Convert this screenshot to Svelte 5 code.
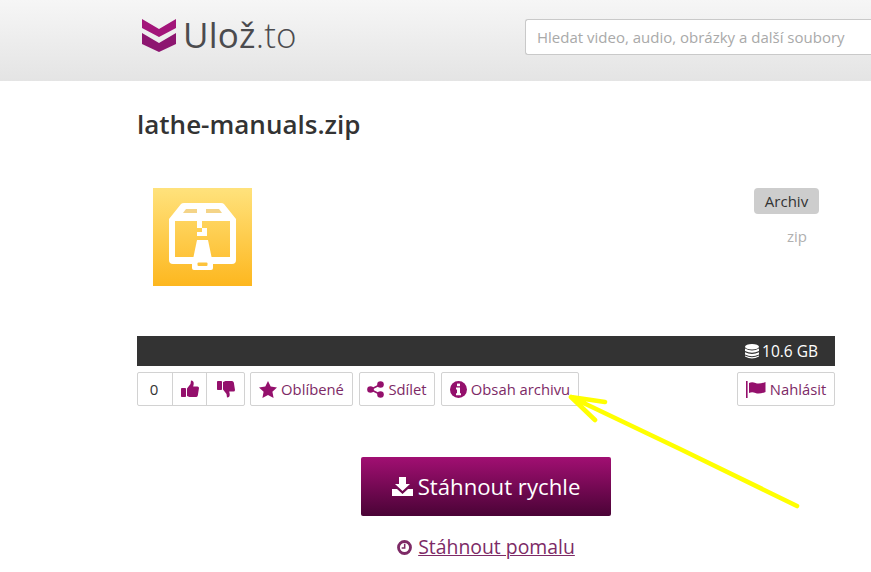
<script>
  const sizeLabel = '10.6 GB'
</script>

<style>
  :global(body) {
    margin: 0;
    background: #fff;
    font-family: "Open Sans", "Liberation Sans", sans-serif;
    color: #333;
  }

  .page {
    position: relative;
    width: 871px;
    height: 572px;
    overflow: hidden;
  }

  .top {
    height: 81px;
    box-sizing: border-box;
    padding: 17px 0 0 142px;
    display: flex;
    background: linear-gradient(#f6f6f6, #e4e4e4);
  }

  .logo {
    display: flex;
    gap: 7px;
    width: 383px;
    height: 36px;
    align-items: center;
  }

  .logo svg {
    flex: none;
  }

  .logo-text {
    font-family: "Open Sans", sans-serif;
    font-size: 35px;
    line-height: 36px;
    color: #4b4b4e;
    letter-spacing: 0.2px;
  }

  .logo-text span {
    font-weight: 300;
  }

  .search {
    width: 346px;
    height: 36px;
    margin-top: 2px;
    box-sizing: border-box;
    padding-left: 11px;
    background: #fff;
    border: 1px solid #c9c9c9;
    border-right: 0;
    border-radius: 3px 0 0 3px;
    font-size: 15px;
    line-height: 35px;
    color: #a9a9a9;
    white-space: nowrap;
  }

  .content {
    width: 698px;
    margin-left: 137px;
  }

  h1 {
    margin: 0;
    padding-top: 25px;
    font-size: 26px;
    line-height: 36px;
    font-weight: 600;
    color: #333;
  }

  .details {
    display: flex;
    justify-content: space-between;
    margin-top: 46px;
    height: 148px;
  }

  .thumb {
    width: 99px;
    height: 98px;
    margin-left: 16px;
    background: linear-gradient(#ffe27c, #fdb71f);
  }

  .thumb svg {
    display: block;
  }

  .meta {
    width: 65px;
    margin-right: 16px;
    text-align: center;
  }

  .badge {
    height: 26px;
    background: #cdcdcd;
    border-radius: 4px;
    font-size: 15px;
    line-height: 26px;
    color: #333;
  }

  .ext {
    margin-top: 11px;
    padding-left: 21px;
    font-size: 15px;
    line-height: 22px;
    color: #b0b0b0;
    text-align: center;
  }

  .bar {
    height: 30px;
    box-sizing: border-box;
    padding-right: 17px;
    display: flex;
    justify-content: flex-end;
    align-items: center;
    gap: 3px;
    background: #333;
    color: #fff;
    font-size: 15.5px;
  }

  .actions {
    display: flex;
    margin-top: 6px;
    gap: 6px;
    height: 34px;
  }

  .btn, .group {
    box-sizing: border-box;
    height: 34px;
    border: 1px solid #d2d2d2;
    border-radius: 2px;
    background: #fff;
    color: #7d2a66;
    font-size: 14.8px;
  }

  .btn {
    display: flex;
    align-items: center;
    justify-content: center;
    gap: 4px;
  }

  .group {
    display: flex;
    width: 108px;
    margin-right: -1px;
  }

  .cell {
    display: flex;
    align-items: center;
    justify-content: center;
    border-left: 1px solid #d2d2d2;
    width: 33px;
  }

  .cell:last-child {
    flex: 1;
  }

  .count {
    width: 32px;
    padding-right: 2px;
    border-left: 0;
    color: #333;
    font-size: 15px;
  }

  .fav { width: 103px; }
  .share { width: 76px; }
  .archive { width: 138px; }
  .report { width: 98px; margin-left: auto; }

  .download {
    width: 250px;
    height: 59px;
    margin: 51px 0 0 224px;
    display: flex;
    align-items: center;
    justify-content: center;
    gap: 5px;
    border-radius: 2px;
    background: linear-gradient(#a10f72, #4a0336);
    color: #fff;
    font-size: 22.2px;
  }

  .slow {
    margin-top: 19px;
    display: flex;
    justify-content: center;
    align-items: center;
    gap: 6px;
    font-size: 19.4px;
    line-height: 24px;
    color: #7d2a66;
  }

  .slow span {
    text-decoration: underline;
    text-decoration-thickness: 1px;
  }

  .arrow {
    position: absolute;
    left: 0;
    top: 0;
    pointer-events: none;
  }
</style>

<div class="page">
  <header class="top">
    <div class="logo">
      <svg width="34" height="33" viewBox="0 0 34 33">
        <path d="M0 0 L17 10 L34 0 V9 L17 18 L0 9 Z" fill="#a3157a" />
        <path d="M0 14 L17 24 L34 14 V25 L17 33 L0 25 Z" fill="#8d1670" />
      </svg>
      <div class="logo-text">Ulož<span>.to</span></div>
    </div>
    <div class="search">Hledat video, audio, obrázky a další soubory</div>
  </header>

  <main class="content">
    <h1>lathe-manuals.zip</h1>

    <div class="details">
      <div class="thumb">
        <svg width="99" height="98" viewBox="0 0 99 98">
          <path d="M16 31 L28 16 Q29 15 31 15 H68 Q70 15 71 16 L83 31 V72 Q83 76 79 76 H58 V69 H77 V33 H22 V69 H41 V76 H20 Q16 76 16 72 Z" fill="#fff" />
          <path d="M30 25 L33 21 H44 V25 Z M53 25 V21 H66 L69 25 Z" fill="#f4d488" />
          <path d="M44 33 H49 V40 H54 V44 H49 V40 H44 Z M49 44 H54 V48 H49 Z M44 44 H49 V48 H44 Z" fill="#fff" />
          <path d="M44 52 H55 L60 76 V80 Q60 82 58 82 H41 Q39 82 39 80 V76 Z" fill="#fff" />
          <rect x="44.5" y="74.5" width="10" height="3.5" rx="1" fill="#fdc33b" />
        </svg>
      </div>
      <div class="meta">
        <div class="badge">Archiv</div>
        <div class="ext">zip</div>
      </div>
    </div>

    <div class="bar">
      <svg width="14" height="15" viewBox="0 0 14 15" fill="#fff">
        <ellipse cx="7" cy="2.8" rx="7" ry="2.8" />
        <path d="M0 4.6 Q7 8.4 14 4.6 V7 Q7 10.6 0 7 Z" />
        <path d="M0 8.2 Q7 11.8 14 8.2 V10.4 Q7 14 0 10.4 Z" />
        <path d="M0 11.4 Q7 15 14 11.4 V12.4 Q7 16.4 0 12.4 Z" />
      </svg>
      <span>{sizeLabel}</span>
    </div>

    <div class="actions">
      <div class="group">
        <div class="cell count">0</div>
        <div class="cell">
          <svg width="18" height="18" viewBox="0 0 18 18" fill="#94106c">
            <rect x="0" y="8" width="5" height="9" rx="0.8" />
            <path d="M6 8.5 L9.5 4 L10 0.5 Q13 0.5 12.7 4 L12.2 6.5 H16.5 Q18 6.5 18 8 L16.8 15.5 Q16.3 17 15 17 H8.5 L6 16 Z" />
          </svg>
        </div>
        <div class="cell">
          <svg width="18" height="18" viewBox="0 0 18 18" fill="#94106c">
            <rect x="0" y="1" width="5" height="9" rx="0.8" />
            <path d="M6 9.5 L9.5 14 L10 17.5 Q13 17.5 12.7 14 L12.2 11.5 H16.5 Q18 11.5 18 10 L16.8 2.5 Q16.3 1 15 1 H8.5 L6 2 Z" />
          </svg>
        </div>
      </div>
      <div class="btn fav">
        <svg width="18" height="17" viewBox="0 0 18 17" fill="#94106c">
          <path d="M9 0 L11.7 5.6 L18 6.5 L13.4 10.7 L14.6 17 L9 14 L3.4 17 L4.6 10.7 L0 6.5 L6.3 5.6 Z" />
        </svg>
        <span>Oblíbené</span>
      </div>
      <div class="btn share">
        <svg width="17" height="17" viewBox="0 0 17 17" fill="#94106c">
          <circle cx="13.5" cy="3.5" r="3.3" />
          <circle cx="3.5" cy="8.5" r="3.3" />
          <circle cx="13.5" cy="13.5" r="3.3" />
          <path d="M3.5 8.5 L13.5 3.5 M3.5 8.5 L13.5 13.5" stroke="#94106c" stroke-width="1.6" />
        </svg>
        <span>Sdílet</span>
      </div>
      <div class="btn archive">
        <svg width="17" height="17" viewBox="0 0 17 17">
          <circle cx="8.5" cy="8.5" r="8.5" fill="#94106c" />
          <rect x="7" y="2.6" width="3" height="2.6" fill="#fff" />
          <path d="M6 6.6 H10 V12.2 H11 V14.2 H6 V12.2 H7 V8.4 H6 Z" fill="#fff" />
        </svg>
        <span>Obsah archivu</span>
      </div>
      <div class="btn report">
        <svg width="20" height="17" viewBox="0 0 20 17" fill="#94106c">
          <rect x="0" y="0" width="1.6" height="17" />
          <path d="M3 2 Q6 0.5 9.5 2 Q13 3.5 19.5 1 V11 Q13 13.5 9.5 12 Q6 10.5 3 12 Z" />
        </svg>
        <span>Nahlásit</span>
      </div>
    </div>

    <div class="download">
      <svg width="21" height="19" viewBox="0 0 21 19" fill="#fff">
        <path d="M7 0 H14 V7 H18 L10.5 14 L3 7 H7 Z" />
        <path d="M0 12 H5 L10.5 17 L16 12 H21 V19 H0 Z" />
      </svg>
      <span>Stáhnout rychle</span>
    </div>

    <div class="slow">
      <svg width="15" height="15" viewBox="0 0 16 16">
        <circle cx="8" cy="8" r="6.4" fill="none" stroke="#7d2a66" stroke-width="3" />
        <path d="M8.2 4 V8.4 H5" fill="none" stroke="#7d2a66" stroke-width="1.6" />
      </svg>
      <span>Stáhnout pomalu</span>
    </div>
  </main>

  <svg class="arrow" width="871" height="572" viewBox="0 0 871 572" fill="none" stroke="#ffff00" stroke-width="4.6" stroke-linecap="round" stroke-linejoin="round">
    <path d="M797 506 L680 449 L571 397 L605 402 M571 397 L595 420" />
  </svg>
</div>
